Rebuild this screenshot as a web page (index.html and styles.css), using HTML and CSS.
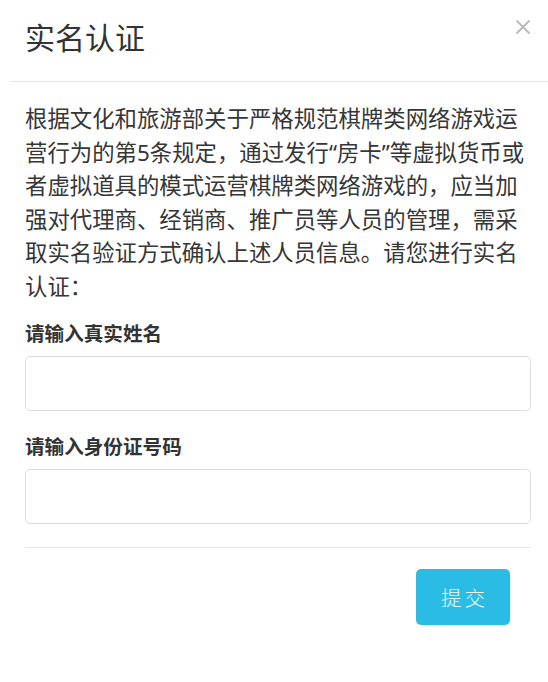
FILE: index.html
```html
<!DOCTYPE html>
<html lang="zh-CN">
<head>
<meta charset="utf-8">
<title>实名认证</title>
<link rel="stylesheet" href="styles.css">
</head>
<body>
<div class="dialog">
  <div class="header">
    <h4 class="title">实名认证</h4>
    <svg class="close" width="14" height="14" viewBox="0 0 14 14" aria-label="关闭">
      <path d="M1 1 L13 13 M13 1 L1 13" stroke="#b9b9b9" stroke-width="1.8" stroke-linecap="round" fill="none"/>
    </svg>
  </div>
  <div class="body">
    <p class="notice">根据文化和旅游部关于严格规范棋牌类网络游戏运营行为的第5条规定，通过发行“房卡”等虚拟货币或者虚拟道具的模式运营棋牌类网络游戏的，应当加强对代理商、经销商、推广员等人员的管理，需采取实名验证方式确认上述人员信息。请您进行实名认证：</p>
    <div class="group">
      <label class="label">请输入真实姓名</label>
      <div class="input"></div>
    </div>
    <div class="group">
      <label class="label">请输入身份证号码</label>
      <div class="input"></div>
    </div>
    <div class="divider"></div>
    <div class="footer">
      <button class="submit">提交</button>
    </div>
  </div>
</div>
</body>
</html>
```
FILE: styles.css
```css
html, body {
  margin: 0;
  padding: 0;
  background: #fff;
}
body {
  font-family: "Noto Sans", "Noto Sans CJK SC", sans-serif;
  color: #333;
  width: 548px;
  height: 682px;
  overflow: hidden;
}
.dialog {
  width: 548px;
}
.header {
  margin-left: 10px;
  padding: 20px 18px 25px 15px;
  border-bottom: 1px solid #e6e6e6;
  display: flex;
  justify-content: space-between;
  align-items: flex-start;
}
.title {
  margin: 0;
  font-size: 30px;
  line-height: 36px;
  font-weight: 400;
  color: #333;
}
.close {
  display: block;
}
.body {
  padding: 20px 17px 0 25px;
}
.notice {
  margin: 0;
  font-size: 22.4px;
  line-height: 33.6px;
  color: #363636;
}
.group {
  margin-top: 16px;
}
.group + .group {
  margin-top: 22px;
}
.label {
  display: block;
  font-size: 19.6px;
  line-height: 27px;
  font-weight: 700;
  color: #333;
  margin-bottom: 9px;
}
.input {
  height: 53px;
  border: 1px solid #dedede;
  border-radius: 5px;
  background: #fff;
}
.divider {
  margin-top: 23px;
  height: 1px;
  background: #e6e6e6;
}
.footer {
  display: flex;
  justify-content: flex-end;
  padding: 21px 21px 0 0;
}
.submit {
  width: 94px;
  height: 56px;
  border: none;
  border-radius: 5px;
  background: #2bbce5;
  color: #f4fbfe;
  font-family: "Noto Sans CJK SC", sans-serif;
  font-weight: 300;
  font-size: 20.5px;
  letter-spacing: 3px;
  padding: 0 0 0 3px;
  display: flex;
  align-items: center;
  justify-content: center;
}
```
